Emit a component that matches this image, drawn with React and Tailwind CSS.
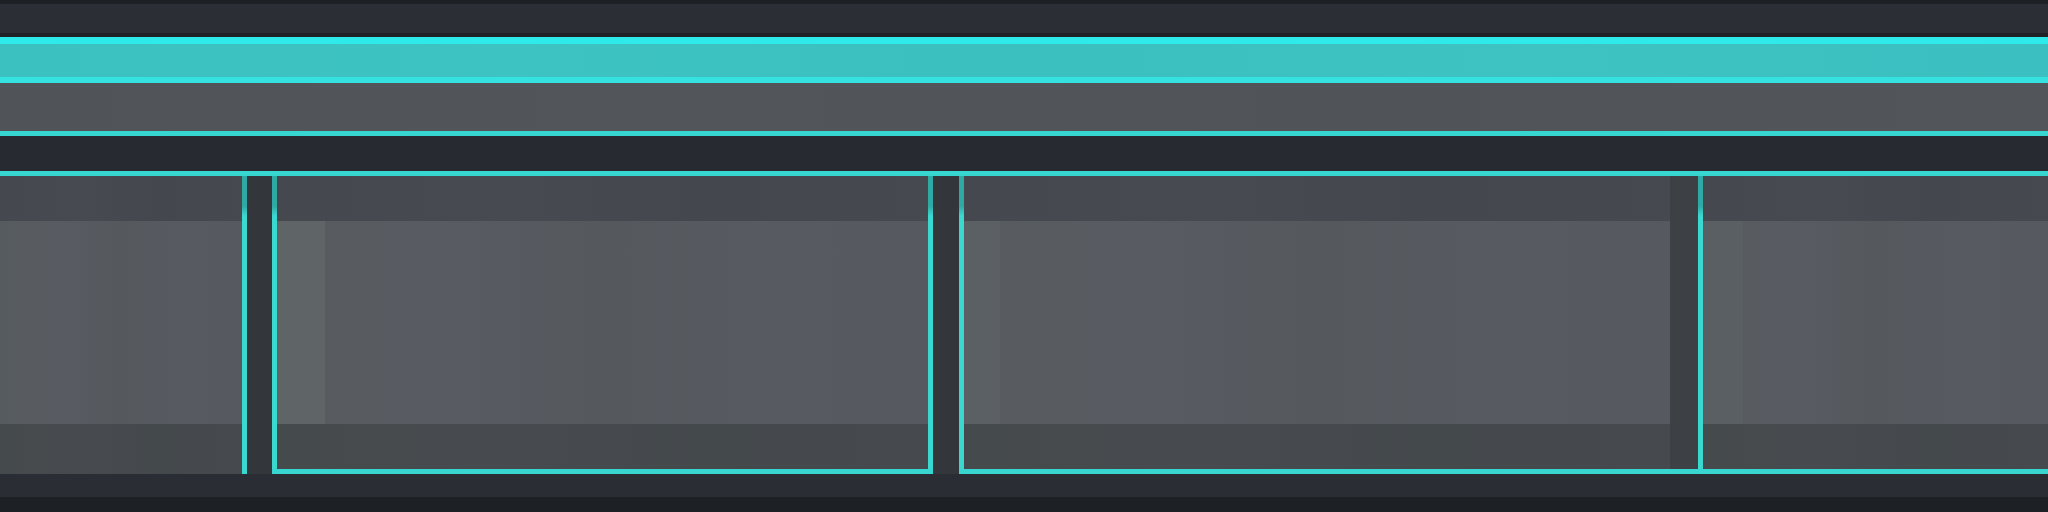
import React from "react";

function VLine() {
  return (
    <div className="w-[5px] shrink-0 bg-[linear-gradient(to_bottom,#2fa9a4_0px,#2fa9a4_30px,#3bd8d0_40px,#3bd8d0_100%)]" />
  );
}

function CellBody({ light, lightW = "w-[48px]", dark }) {
  return (
    <div className="flex-1 flex flex-row min-w-0">
      <div className="flex-1 flex flex-col min-w-0">
        <div className="h-[45px] bg-[linear-gradient(to_right,#45484e,#474a50,#44474d,#46494f)]" />
        <div className="h-[203px] flex flex-row bg-[linear-gradient(to_right,#565b5f,#585c62,#55595e,#575b61,#565a60)]">
          {light ? <div className={`${lightW} h-full ${light}`} /> : null}
        </div>
        <div className="flex-1 bg-[linear-gradient(to_right,#454a4c,#474b4f,#44494c,#464a4e)]" />
      </div>
      {dark ? <div className="w-[28px] shrink-0 bg-[#3d4045]" /> : null}
    </div>
  );
}

function Gap({ w }) {
  return <div className={`${w} shrink-0 bg-[#33363b]`} />;
}

export default function App() {
  return (
    <div className="w-[2048px] h-[512px] flex flex-col bg-[#2a2d33] overflow-hidden">
      <div className="h-[4px] bg-[#1d2025]" />
      <div className="h-[29px] bg-[#2b2e35]" />
      <div className="h-[4px] bg-[#1f2227]" />
      <div className="h-[46px] flex flex-col">
        <div className="h-[7px] bg-[#2eeaea]" />
        <div className="flex-1 bg-[linear-gradient(to_right,#3cc1c1,#3dc3c1,#3bc0bf,#3ec3c2,#3bbfc0)]" />
        <div className="h-[6px] bg-[#36e2df]" />
      </div>
      <div className="h-[48px] bg-[linear-gradient(to_right,#505459,#52565b,#505458,#52565a)]" />
      <div className="h-[5px] bg-[#38d6d0]" />
      <div className="h-[35px] bg-[#272a31]" />
      <div className="h-[5px] bg-[#38d6d0]" />
      <div className="h-[298px] flex flex-row">
        {/* cell 1 */}
        <div className="w-[247px] shrink-0 flex flex-row">
          <CellBody />
          <VLine />
        </div>
        <Gap w="w-[25px]" />
        {/* cell 2 */}
        <div className="w-[661px] shrink-0 flex flex-col">
          <div className="flex-1 flex flex-row">
            <VLine />
            <CellBody light="bg-[#5f6467]" lightW="w-[48px]" />
            <VLine />
          </div>
          <div className="h-[5px] bg-[#38d6d0]" />
        </div>
        <Gap w="w-[26px]" />
        {/* cell 3 */}
        <div className="w-[739px] shrink-0 flex flex-col">
          <div className="flex-1 flex flex-row">
            <VLine />
            <CellBody light="bg-[#5b6064]" lightW="w-[36px]" dark />
          </div>
          <div className="h-[5px] bg-[#38d6d0]" />
        </div>
        {/* cell 4 */}
        <div className="flex-1 flex flex-col">
          <div className="flex-1 flex flex-row">
            <VLine />
            <CellBody light="bg-[#5a5f63]" lightW="w-[40px]" />
          </div>
          <div className="h-[5px] bg-[#38d6d0]" />
        </div>
      </div>
      <div className="h-[23px] bg-[#2a2d33]" />
      <div className="flex-1 bg-[#1d2025]" />
    </div>
  );
}
